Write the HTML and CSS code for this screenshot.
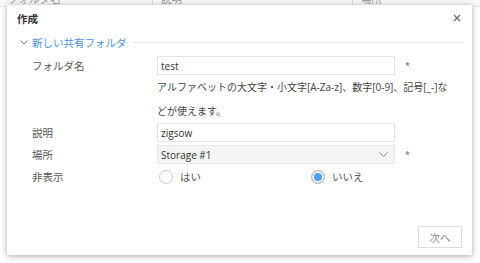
FILE: index.html
```html
<!DOCTYPE html>
<html lang="ja">
<head>
    <meta charset="UTF-8">
    <title>作成</title>
    <link rel="stylesheet" href="styles.css">
</head>
<body>
    <div class="list-head">
        <div class="col col-name">フォルダ名</div>
        <div class="col col-desc">説明</div>
        <div class="col col-place">場所</div>
    </div>

    <div class="dialog">
        <div class="dialog-head">
            <span class="dialog-title">作成</span>
            <span class="close">
                <svg width="8" height="8" viewBox="0 0 8 8"><path d="M1 1L7 7M7 1L1 7" stroke="#666" stroke-width="1.2" fill="none"/></svg>
            </span>
        </div>

        <div class="section">
            <svg class="section-arrow" width="8" height="5" viewBox="0 0 8 5"><path d="M0.5 0.5L4 4L7.5 0.5" stroke="#888" stroke-width="1" fill="none"/></svg>
            <span class="section-title">新しい共有フォルダ</span>
            <span class="section-line"></span>
        </div>

        <div class="form">
            <div class="label">フォルダ名</div>
            <div class="field"><input class="text" value="test"></div>
            <div class="req">*</div>

            <div class="help">アルファベットの大文字・小文字[A-Za-z]、数字[0-9]、記号[_-]な<br>どが使えます。</div>

            <div class="label">説明</div>
            <div class="field"><input class="text" value="zigsow"></div>
            <div></div>

            <div class="label label-place">場所</div>
            <div class="field">
                <div class="select">
                    <span>Storage #1</span>
                    <svg width="9" height="5" viewBox="0 0 9 5"><path d="M0.5 0.5L4.5 4.5L8.5 0.5" stroke="#888" stroke-width="1" fill="none"/></svg>
                </div>
            </div>
            <div class="req req-place">*</div>

            <div class="label label-radio">非表示</div>
            <div class="radios">
                <label class="radio"><span class="dot"></span>はい</label>
                <label class="radio checked"><span class="dot"></span>いいえ</label>
            </div>
        </div>

        <div class="dialog-foot">
            <button class="next">次へ</button>
        </div>
    </div>
</body>
</html>
```

FILE: styles.css
```css
body {
    margin: 0;
    width: 480px;
    height: 263px;
    overflow: hidden;
    background: #fff;
    font-family: "Open Sans", "Noto Sans CJK JP", sans-serif;
    font-size: 10.5px;
    color: #444;
}

.list-head {
    display: flex;
    height: 14px;
    margin-top: -8px;
    background: #f8f8f8;
    border-bottom: 1px solid #e6e6e6;
    color: #999;
    line-height: 14px;
}
.col { padding-left: 8px; box-sizing: border-box; }
.col-name { width: 153px; border-right: 1px solid #ddd; }
.col-desc { width: 200px; border-right: 1px solid #ddd; }
.col-place { flex: 1; }

.dialog {
    position: absolute;
    left: 7px;
    top: 5px;
    width: 465px;
    height: 250px;
    background: #fff;
    box-shadow: 0 1px 6px rgba(0,0,0,0.35);
    display: flex;
    flex-direction: column;
}

.dialog-head {
    position: relative;
    height: 26px;
    display: flex;
    align-items: center;
    padding-left: 10px;
}
.dialog-title { font-weight: bold; color: #333; }
.close { position: absolute; right: 11px; top: 6px; }

.section {
    display: flex;
    align-items: center;
    height: 16px;
    margin: 3px 10px 0 13px;
}
.section-arrow { margin-right: 4px; }
.section-title { color: #4a94e0; }
.section-line {
    flex: 1;
    height: 1px;
    margin-left: 6px;
    background: #e8e8e8;
}

.form {
    display: grid;
    grid-template-columns: 115px 238px 50px;
    column-gap: 10px;
    padding-left: 25px;
    margin-top: 6px;
}
.label {
    display: flex;
    align-items: center;
    color: #555;
}
.field { display: flex; align-items: center; }
.req { display: flex; align-items: center; color: #666; font-size: 9px; }

.text {
    width: 100%;
    height: 19px;
    box-sizing: border-box;
    border: 1px solid #e4e4e4;
    padding: 0 3px;
    font-family: "Open Sans", "Noto Sans CJK JP", sans-serif;
    font-size: 10px;
    color: #333;
    outline: none;
}

.help {
    grid-column: 2 / 4;
    line-height: 24px;
    font-size: 10px;
    color: #444;
    white-space: nowrap;
}

.select {
    width: 100%;
    height: 19px;
    box-sizing: border-box;
    margin-top: 3px;
    border: 1px solid #e8e8e8;
    background: #f4f4f4;
    padding: 0 6px 0 3px;
    display: flex;
    align-items: center;
    justify-content: space-between;
    font-size: 10px;
    color: #333;
}
.label-place, .req-place { margin-top: 3px; }

.label-radio, .radios { height: 25px; }
.radios {
    grid-column: 2 / 4;
    display: flex;
    align-items: center;
}
.radio {
    display: flex;
    align-items: center;
    flex: 0 0 152px;
    color: #555;
}
.dot {
    width: 14px;
    height: 14px;
    box-sizing: border-box;
    border: 1px solid #ccc;
    border-radius: 50%;
    margin: 0 7px 0 2px;
    background: #fff;
}
.radio.checked .dot {
    border-color: #bbb;
    background: #4da3f7;
    box-shadow: inset 0 0 0 2px #fff;
}

.dialog-foot {
    margin-top: auto;
    padding: 0 10px 7px 0;
    display: flex;
    justify-content: flex-end;
}
.next {
    width: 44px;
    height: 22px;
    background: #fff;
    border: 1px solid #ddd;
    color: #888;
    font-family: "Open Sans", "Noto Sans CJK JP", sans-serif;
    font-size: 10.5px;
    padding: 0;
}
```
